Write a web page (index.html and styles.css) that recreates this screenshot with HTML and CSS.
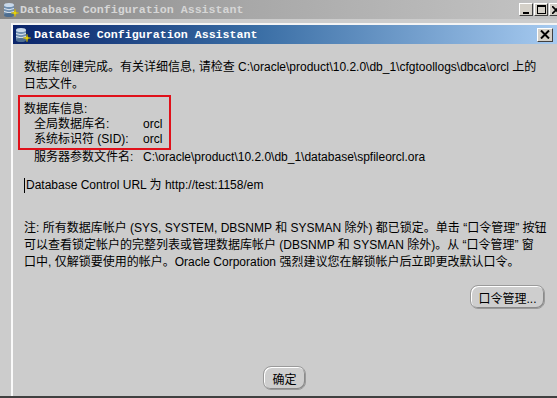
FILE: index.html
```html
<!DOCTYPE html>
<html lang="zh-CN">
<head>
<meta charset="utf-8">
<title>Database Configuration Assistant</title>
<link rel="stylesheet" href="styles.css">
</head>
<body>
<div class="screen">
  <div class="outer-title">
    <svg class="app-icon" width="16" height="16" viewBox="0 0 16 16">
      <rect x="1" y="3" width="10" height="10" fill="#6f8fb0"/>
      <ellipse cx="6" cy="3" rx="5" ry="2" fill="#c9d9ea"/>
      <path d="M1 6.5 Q6 9 11 6.5 M1 9.5 Q6 12 11 9.5" stroke="#dfe8f2" stroke-width="1" fill="none"/>
      <ellipse cx="6" cy="13" rx="5" ry="2" fill="#4d6d90"/>
      <path d="M12 7 L12.8 10.2 L16 11 L12.8 11.8 L12 15 L11.2 11.8 L8 11 L11.2 10.2 Z" fill="#f4e000" stroke="#c8a800" stroke-width="0.4"/>
    </svg>
    <span class="outer-title-text">Database Configuration Assistant</span>
    <div class="win-controls">
      <span class="wbtn"><svg width="8" height="8" viewBox="0 0 8 8"><rect x="1" y="6" width="6" height="2" fill="#000"/></svg></span>
      <span class="wbtn"><svg width="9" height="9" viewBox="0 0 9 9"><rect x="0.5" y="0.5" width="8" height="8" fill="none" stroke="#000"/><rect x="0" y="0" width="9" height="2" fill="#000"/></svg></span>
      <span class="wbtn"><svg width="8" height="8" viewBox="0 0 8 8"><path d="M0 0 L8 8 M8 0 L0 8" stroke="#000" stroke-width="1.6"/></svg></span>
    </div>
  </div>

  <div class="dialog">
    <div class="dialog-title">
      <svg class="app-icon" width="16" height="16" viewBox="0 0 16 16">
        <rect x="1" y="3" width="10" height="10" fill="#6f8fb0"/>
        <ellipse cx="6" cy="3" rx="5" ry="2" fill="#c9d9ea"/>
        <path d="M1 6.5 Q6 9 11 6.5 M1 9.5 Q6 12 11 9.5" stroke="#dfe8f2" stroke-width="1" fill="none"/>
        <ellipse cx="6" cy="13" rx="5" ry="2" fill="#4d6d90"/>
        <path d="M12 7 L12.8 10.2 L16 11 L12.8 11.8 L12 15 L11.2 11.8 L8 11 L11.2 10.2 Z" fill="#f4e000" stroke="#c8a800" stroke-width="0.4"/>
      </svg>
      <span class="dialog-title-text">Database Configuration Assistant</span>
      <span class="close-btn"><svg width="10" height="9" viewBox="0 0 10 9"><path d="M1 0.5 L9 8.5 M9 0.5 L1 8.5" stroke="#000" stroke-width="2"/></svg></span>
    </div>

    <div class="content">
      <div class="msg">
        <div>数据库创建完成。有关详细信息, 请检查 C:\oracle\product\10.2.0\db_1\cfgtoollogs\dbca\orcl 上的</div>
        <div>日志文件。</div>
      </div>

      <div class="infobox">
        <div class="info-head">数据库信息:</div>
        <div class="info-row"><span class="info-label">全局数据库名:</span><span>orcl</span></div>
        <div class="info-row"><span class="info-label">系统标识符 (SID):</span><span>orcl</span></div>
      </div>
      <div class="info-row spfile"><span class="info-label">服务器参数文件名:</span><span>C:\oracle\product\10.2.0\db_1\database\spfileorcl.ora</span></div>

      <div class="url-line"><span class="caret"></span>Database Control URL 为 http://test:1158/em</div>

      <div class="note">
        <div>注: 所有数据库帐户 (SYS, SYSTEM, DBSNMP 和 SYSMAN 除外) 都已锁定。单击 “口令管理” 按钮</div>
        <div>可以查看锁定帐户的完整列表或管理数据库帐户 (DBSNMP 和 SYSMAN 除外)。从 “口令管理” 窗</div>
        <div>口中, 仅解锁要使用的帐户。Oracle Corporation 强烈建议您在解锁帐户后立即更改默认口令。</div>
      </div>

      <div class="pw-row"><button class="pill pw-btn">口令管理...</button></div>
      <div class="ok-row"><button class="pill ok-btn">确定</button></div>
    </div>
  </div>
</div>
</body>
</html>
```
FILE: styles.css
```css
* { box-sizing: border-box; }
html, body { margin: 0; padding: 0; }
body {
  width: 557px;
  height: 398px;
  overflow: hidden;
  background: #cccccc;
  font-family: "Liberation Sans", "Noto Sans CJK SC", sans-serif;
  font-size: 12px;
  color: #000;
}
.screen {
  width: 557px;
  height: 398px;
  display: flex;
  flex-direction: column;
  border-bottom: 2px solid #404040;
}
.outer-title {
  height: 19px;
  flex: none;
  display: flex;
  align-items: center;
  padding-left: 3px;
  background: linear-gradient(to right, #858585, #a8a8a8 45%, #c4c4c4);
}
.app-icon { flex: none; display: block; }
.outer-title-text {
  margin-left: 1px;
  font-family: "Liberation Mono", monospace;
  font-weight: bold;
  font-size: 11.65px;
  color: #d6d6d6;
}
.win-controls {
  margin-left: auto;
  display: flex;
  gap: 1px;
  margin-right: -6px;
  align-self: flex-start;
  margin-top: 3px;
}
.wbtn {
  width: 14px;
  height: 13px;
  background: #d4d0c8;
  border: 1px solid;
  border-color: #fff #404040 #404040 #fff;
  display: flex;
  align-items: center;
  justify-content: center;
}
.dialog {
  flex: 1;
  margin-top: 4px;
  margin-left: 11px;
  border-top: 2px solid #f4f4f4;
  border-left: 2px solid #fafafa;
  display: flex;
  flex-direction: column;
  min-height: 0;
}
.dialog-title {
  height: 19px;
  flex: none;
  display: flex;
  align-items: center;
  padding-left: 2px;
  background: linear-gradient(to right, #0a246a, #3a6ea5 45%, #a6caf0);
}
.dialog-title-text {
  margin-left: 3px;
  font-family: "Liberation Mono", monospace;
  font-weight: bold;
  font-size: 11.65px;
  color: #fff;
}
.close-btn {
  margin-left: auto;
  margin-right: 4px;
  width: 16px;
  height: 14px;
  background: #d4d0c8;
  border: 1px solid;
  border-color: #fff #404040 #404040 #fff;
  display: flex;
  align-items: center;
  justify-content: center;
}
.content {
  flex: 1;
  display: flex;
  flex-direction: column;
  padding: 15px 12px 0 11px;
  white-space: nowrap;
}
.msg { line-height: 17px; }
.infobox {
  margin-top: 2px;
  margin-left: -6px;
  width: 153px;
  border: 2px solid #e0101a;
  padding: 5px 0 1px 4px;
  line-height: 15px;
}
.info-row { display: flex; line-height: 15px; }
.info-label { width: 119px; flex: none; padding-left: 10px; }
.url-line {
  margin-top: 12px;
  line-height: 16px;
  display: flex;
  align-items: center;
}
.caret {
  display: inline-block;
  width: 1px;
  height: 15px;
  background: #000;
  margin-right: 1px;
}
.note {
  margin-top: 27px;
  line-height: 17px;
}
.pw-row {
  margin-top: 14px;
  display: flex;
  justify-content: flex-end;
}
.pill {
  font-family: "Liberation Sans", "Noto Sans CJK SC", sans-serif;
  font-size: 12px;
  color: #000;
  background: #cecece;
  border: 1px solid #9a9a9a;
  border-radius: 8px;
  box-shadow: inset 1px 1px 0 #fff, inset -1px -1px 0 #8a8a8a;
  padding: 0;
  height: 24px;
}
.pw-btn { width: 75px; }
.ok-row {
  margin-top: 57px;
  display: flex;
  justify-content: flex-start;
  padding-left: 239px;
}
.ok-btn { width: 43px; }
```
